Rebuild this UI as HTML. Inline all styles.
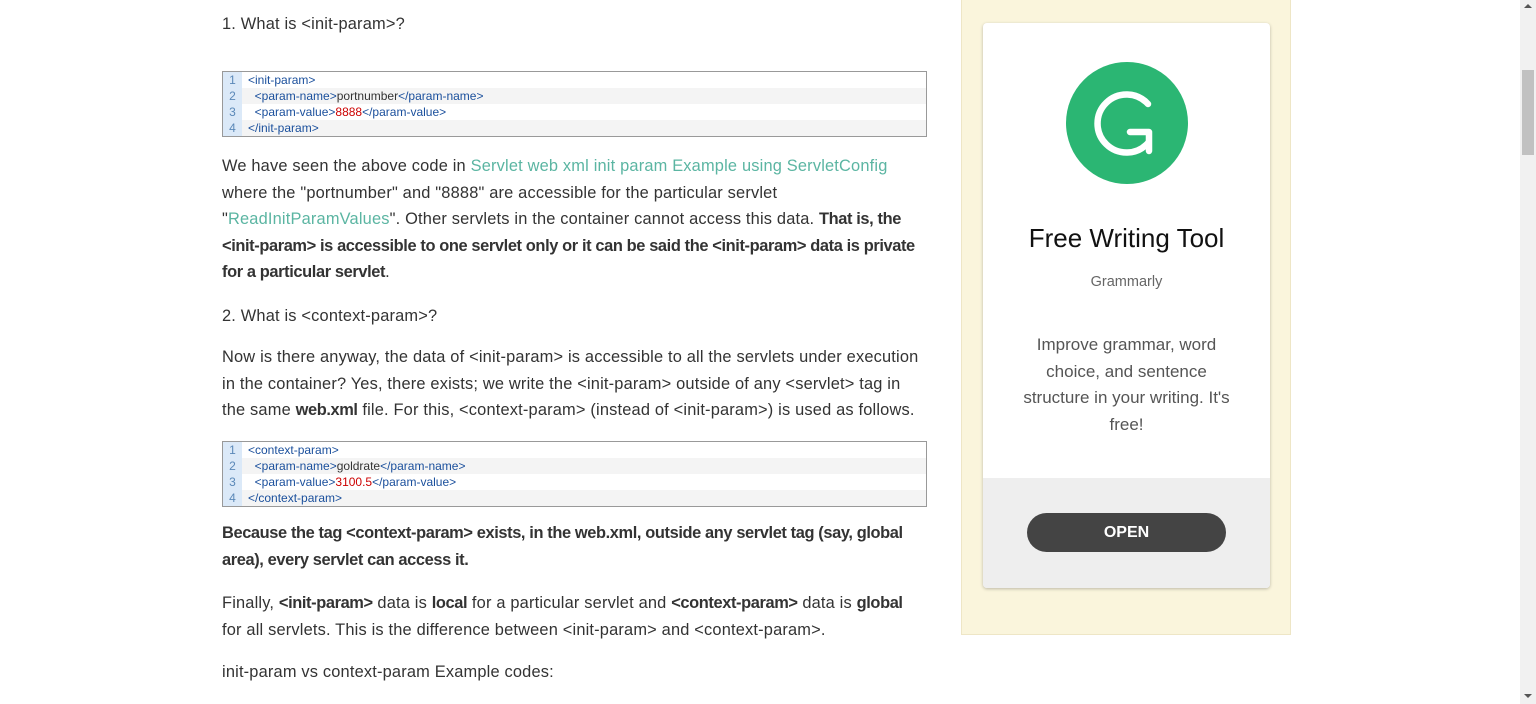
<!DOCTYPE html>
<html><head><style>
body{margin:0;width:1536px;height:704px;overflow:hidden;background:#fff;font-family:"Liberation Sans",sans-serif;color:#333;position:relative}
.main{position:absolute;left:222px;top:0;width:708px;font-size:16.4px;line-height:26.5px;letter-spacing:.18px}
.main p{margin:0;position:absolute;left:0;width:760px;white-space:nowrap}
.main b{letter-spacing:-.38px}
a{color:#5bb5a2;text-decoration:none}
.code{position:absolute;left:222px;width:703px;border:1px solid #999;font-family:"Liberation Sans",sans-serif;font-size:12px;line-height:16px;background:#fff}
.code div{display:flex;height:16px}
.code div:nth-child(even){background:#f4f4f4}
.code .n{width:19px;background:#dbe9f8;color:#5a88b8;text-align:center;margin-right:6px;flex:none}
.t{color:#1a4f9c}.v{color:#c00}.x{color:#333}
.side{position:absolute;left:961px;top:-1px;width:328px;height:634px;background:#faf5dc;border:1px solid #eee6c6}
.card{position:absolute;left:21px;top:23px;width:287px;height:565px;background:#fff;border-radius:4px;box-shadow:0 1px 3px rgba(0,0,0,.25);overflow:hidden;text-align:center}
.bot{position:absolute;left:0;top:455px;width:100%;height:110px;background:#eee}
.btn{position:absolute;left:44px;top:35px;width:199px;height:39px;border-radius:20px;background:#444;color:#fff;font-weight:bold;font-size:16px;line-height:39px}
.sb{position:absolute;left:1520px;top:0;width:16px;height:704px;background:#f1f1f1}
</style></head><body>
<div class="main">
<p style="top:11px">1. What is &lt;init-param&gt;?</p>
<p style="top:153px">We have seen the above code in <a>Servlet web xml init param Example using ServletConfig</a><br>where the "portnumber" and "8888" are accessible for the particular servlet<br>"<a>ReadInitParamValues</a>". Other servlets in the container cannot access this data. <b>That is, the</b><br><b>&lt;init-param&gt; is accessible to one servlet only or it can be said the &lt;init-param&gt; data is private</b><br><b>for a particular servlet</b>.</p>
<p style="top:303px">2. What is &lt;context-param&gt;?</p>
<p style="top:344px">Now is there anyway, the data of &lt;init-param&gt; is accessible to all the servlets under execution<br>in the container? Yes, there exists; we write the &lt;init-param&gt; outside of any &lt;servlet&gt; tag in<br>the same <b>web.xml</b> file. For this, &lt;context-param&gt; (instead of &lt;init-param&gt;) is used as follows.</p>
<p style="top:520px"><b>Because the tag &lt;context-param&gt; exists, in the web.xml, outside any servlet tag (say, global</b><br><b>area), every servlet can access it.</b></p>
<p style="top:590px">Finally, <b>&lt;init-param&gt;</b> data is <b>local</b> for a particular servlet and <b>&lt;context-param&gt;</b> data is <b>global</b><br>for all servlets. This is the difference between &lt;init-param&gt; and &lt;context-param&gt;.</p>
<p style="top:659px">init-param vs context-param Example codes:</p>
</div>
<div class="code" style="top:71px">
<div><span class="n">1</span><span class="t">&lt;init-param&gt;</span></div>
<div><span class="n">2</span><span class="t">&nbsp;&nbsp;&lt;param-name&gt;<span class="x">portnumber</span>&lt;/param-name&gt;</span></div>
<div><span class="n">3</span><span class="t">&nbsp;&nbsp;&lt;param-value&gt;<span class="v">8888</span>&lt;/param-value&gt;</span></div>
<div><span class="n">4</span><span class="t">&lt;/init-param&gt;</span></div>
</div>
<div class="code" style="top:441px">
<div><span class="n">1</span><span class="t">&lt;context-param&gt;</span></div>
<div><span class="n">2</span><span class="t">&nbsp;&nbsp;&lt;param-name&gt;<span class="x">goldrate</span>&lt;/param-name&gt;</span></div>
<div><span class="n">3</span><span class="t">&nbsp;&nbsp;&lt;param-value&gt;<span class="v">3100.5</span>&lt;/param-value&gt;</span></div>
<div><span class="n">4</span><span class="t">&lt;/context-param&gt;</span></div>
</div>
<div class="side"><div class="card">
<svg style="position:absolute;left:83px;top:39px" width="122" height="122" viewBox="0 0 122 122"><circle cx="61" cy="61" r="61" fill="#2bb673"/><path d="M82 42 A29 29 0 1 0 82 81" fill="none" stroke="#fff" stroke-width="6.5" stroke-linecap="round"/><path d="M64 70 H83 V89" fill="none" stroke="#fff" stroke-width="6.5" stroke-linecap="round" stroke-linejoin="round"/></svg>
<div style="position:absolute;top:200px;width:100%;font-size:26px;color:#111">Free Writing Tool</div>
<div style="position:absolute;top:251px;width:100%;font-size:14.5px;color:#666">Grammarly</div>
<div style="position:absolute;top:309px;left:28px;width:231px;font-size:17px;line-height:26.5px;color:#555">Improve grammar, word choice, and sentence structure in your writing. It's free!</div>
<div class="bot"><div class="btn">OPEN</div></div>
</div></div>
<div class="sb"><div style="position:absolute;left:2px;top:70px;width:12px;height:85px;background:#c1c1c1"></div>
<div style="position:absolute;left:4px;top:4px;border:4px solid transparent;border-bottom:4px solid #555;border-top:0"></div>
<div style="position:absolute;left:4px;top:694px;border:4px solid transparent;border-top:4px solid #555;border-bottom:0"></div></div>
</body></html>
